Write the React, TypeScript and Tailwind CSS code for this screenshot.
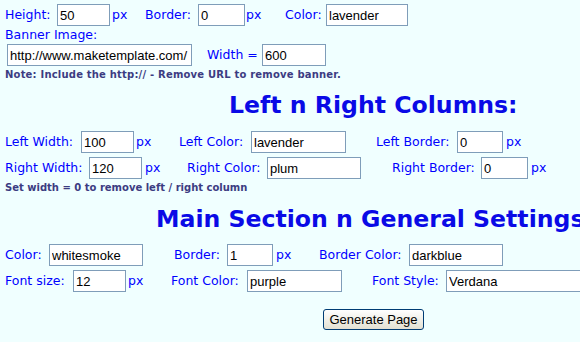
import React from 'react';

const label = "text-[#0000ff] text-[12.5px] whitespace-nowrap shrink-0";
const field = "h-[22px] shrink-0 border border-[#7f9db9] bg-white px-[2px] text-[13px] text-black outline-none";
const inputFont = { fontFamily: '"Liberation Sans", Arial, sans-serif' };

const Field: React.FC<{ value: string; w: string }> = ({ value, w }) => (
    <input className={`${field} ${w}`} style={inputFont} defaultValue={value} />
);

const App: React.FC = () => {
    return (
        <div
            className="w-[580px] h-[342px] overflow-hidden bg-[#f0ffff] pt-[4px]"
            style={{ fontFamily: '"DejaVu Sans", Verdana, sans-serif' }}
        >
            {/* banner */}
            <div className="flex items-center h-[22px] pl-[5px]">
                <span className={`${label} w-[52px]`}>Height:</span>
                <Field value="50" w="w-[53px]" />
                <span className={`${label} ml-[2px] w-[33px]`}>px</span>
                <span className={`${label} w-[53px]`}>Border:</span>
                <Field value="0" w="w-[47px]" />
                <span className={`${label} ml-[1px] w-[39px]`}>px</span>
                <span className={`${label} w-[41px]`}>Color:</span>
                <Field value="lavender" w="w-[82px]" />
            </div>
            <div className="flex items-center h-[18px] pl-[5px]">
                <span className={label}>Banner Image:</span>
            </div>
            <div className="flex items-center h-[22px] pl-[7px]">
                <Field value="http://www.maketemplate.com/" w="w-[185px]" />
                <span className={`${label} ml-[15px] w-[55px]`}>Width =</span>
                <Field value="600" w="w-[64px]" />
            </div>
            <div className="flex items-center h-[16px] pl-[5px]">
                <span className="text-[10px] tracking-[0.2px] font-bold text-[#3c3c82] whitespace-nowrap">
                    Note: Include the http:// - Remove URL to remove banner.
                </span>
            </div>

            {/* columns */}
            <h2 className="mt-[9px] h-[28px] pl-[229px] text-[23.6px] leading-[28px] font-bold text-[#0a0ae6] whitespace-nowrap">
                Left n Right Columns:
            </h2>
            <div className="mt-[12px] flex items-center h-[22px] pl-[5px]">
                <span className={`${label} w-[76px]`}>Left Width:</span>
                <Field value="100" w="w-[53px]" />
                <span className={`${label} ml-[2px] w-[43px]`}>px</span>
                <span className={`${label} w-[72px]`}>Left Color:</span>
                <Field value="lavender" w="w-[95px]" />
                <span className={`${label} ml-[30px] w-[81px]`}>Left Border:</span>
                <Field value="0" w="w-[46px]" />
                <span className={`${label} ml-[3px]`}>px</span>
            </div>
            <div className="mt-[4px] flex items-center h-[22px] pl-[5px]">
                <span className={`${label} w-[84px]`}>Right Width:</span>
                <Field value="120" w="w-[53px]" />
                <span className={`${label} ml-[3px] w-[42px]`}>px</span>
                <span className={`${label} w-[80px]`}>Right Color:</span>
                <Field value="plum" w="w-[94px]" />
                <span className={`${label} ml-[31px] w-[89px]`}>Right Border:</span>
                <Field value="0" w="w-[47px]" />
                <span className={`${label} ml-[3px]`}>px</span>
            </div>
            <div className="flex items-center h-[16px] pl-[5px]">
                <span className="text-[10px] font-bold text-[#3c3c82] whitespace-nowrap">
                    Set width = 0 to remove left / right column
                </span>
            </div>

            {/* main section */}
            <h2 className="mt-[10px] h-[28px] pl-[156px] text-[23.6px] leading-[28px] font-bold text-[#0a0ae6] whitespace-nowrap">
                Main Section n General Settings
            </h2>
            <div className="mt-[11px] flex items-center h-[22px] pl-[5px]">
                <span className={`${label} w-[44px]`}>Color:</span>
                <Field value="whitesmoke" w="w-[94px]" />
                <span className={`${label} ml-[31px] w-[53px]`}>Border:</span>
                <Field value="1" w="w-[46px]" />
                <span className={`${label} ml-[3px] w-[43px]`}>px</span>
                <span className={`${label} w-[90px]`}>Border Color:</span>
                <Field value="darkblue" w="w-[94px]" />
            </div>
            <div className="mt-[4px] flex items-center h-[22px] pl-[5px]">
                <span className={`${label} w-[68px]`}>Font size:</span>
                <Field value="12" w="w-[53px]" />
                <span className={`${label} ml-[2px] w-[43px]`}>px</span>
                <span className={`${label} w-[76px]`}>Font Color:</span>
                <Field value="purple" w="w-[95px]" />
                <span className={`${label} ml-[30px] w-[74px]`}>Font Style:</span>
                <Field value="Verdana" w="w-[200px]" />
            </div>
            <div className="mt-[15px] pl-[323px]">
                <button
                    type="button"
                    className="h-[21px] w-[101px] rounded-[3px] border border-[#003c74] bg-gradient-to-b from-white to-[#e3e0d2] text-[13px] text-black leading-none"
                    style={inputFont}
                >
                    Generate Page
                </button>
            </div>
        </div>
    );
};

export default App;
